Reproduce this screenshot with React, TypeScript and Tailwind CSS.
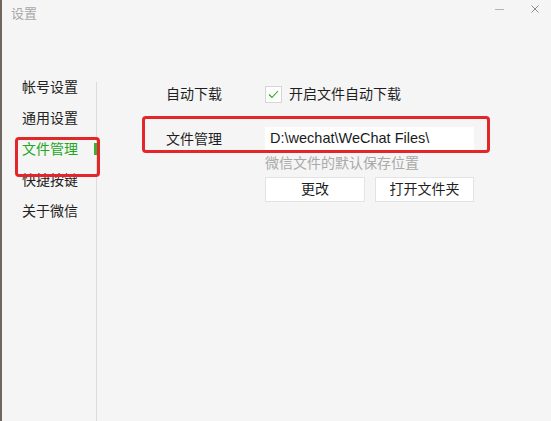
import React from 'react';

const navItems = ['帐号设置', '通用设置', '文件管理', '快捷按键', '关于微信'];

const App: React.FC = () => {
  const active = '文件管理';

  return (
    <div
      className="relative w-[551px] h-[421px] overflow-hidden bg-[#f5f5f5] border-l-2 border-[#6f6660] text-[#1f1f1f]"
      style={{ fontFamily: '"Liberation Sans", "Noto Sans CJK SC", sans-serif' }}
    >
      {/* title bar */}
      <div className="h-[72px] flex items-start justify-between">
        <div className="pl-[9px] pt-[5px] text-[13px] leading-[17px] text-[#a8a8a8]">设置</div>
        <div className="flex items-center pt-[5px] pr-[12px]">
          <div className="w-[9px] h-px bg-[#b5b5b5] mt-[1px]" />
          <svg className="ml-[27px]" width="8" height="8" viewBox="0 0 8 8">
            <path d="M0.5 0.5 L7.5 7.5 M7.5 0.5 L0.5 7.5" stroke="#8a8a8a" strokeWidth="1" />
          </svg>
        </div>
      </div>

      <div className="flex h-[349px]">
        {/* nav */}
        <div className="w-[94px] flex flex-col pl-[20px]">
          {navItems.map((item) => (
            <div
              key={item}
              className={`h-[31px] flex items-center justify-between text-[14px] ${
                item === active ? 'text-[#22a81c]' : 'text-[#222]'
              }`}
            >
              <span>{item}</span>
              {item === active && (
                <span className="relative z-10 w-[3px] h-[12px] bg-[#3cb035] -mr-[1px] mt-[-1px]" />
              )}
            </div>
          ))}
        </div>
        <div className="w-px mt-[10px] bg-[#dcdcdc]" />

        {/* content */}
        <div className="flex-1 pl-[69px] pt-[13px]">
          <div className="flex items-center h-[18px]">
            <div className="w-[99px] text-[14px]">自动下载</div>
            <div className="w-[17px] h-[17px] bg-white border border-[#d6d6d6] flex items-center justify-center">
              <svg width="11" height="9" viewBox="0 0 11 9">
                <path d="M1 4.5 L4 7.5 L10 1" fill="none" stroke="#1aad19" strokeWidth="1.1" />
              </svg>
            </div>
            <div className="ml-[7px] text-[14px]">开启文件自动下载</div>
          </div>

          <div className="flex items-center mt-[24px] h-[24px]">
            <div className="w-[99px] text-[14px]">文件管理</div>
            <div className="w-[209px] h-[24px] bg-white pl-[5px] flex items-center text-[14.5px] text-[#1a1a1a]">
              D:\wechat\WeChat Files\
            </div>
          </div>

          <div className="ml-[99px] mt-[4px] text-[14px] leading-[16px] text-[#a9a9a9]">微信文件的默认保存位置</div>

          <div className="ml-[99px] mt-[6px] flex gap-[10px]">
            <button className="w-[100px] h-[25px] bg-white border border-[#e3e3e3] text-[14px] text-[#1f1f1f]">更改</button>
            <button className="w-[99px] h-[25px] bg-white border border-[#e3e3e3] text-[14px] text-[#1f1f1f]">打开文件夹</button>
          </div>
        </div>
      </div>

      {/* annotation boxes */}
      <div className="absolute left-[13px] top-[137px] w-[85px] h-[40px] border-[3px] border-[#e2262a] rounded-[4px]" />
      <div className="absolute left-[140px] top-[116px] w-[348px] h-[37px] border-[3px] border-[#e2262a] rounded-[4px]" />
    </div>
  );
};

export default App;
